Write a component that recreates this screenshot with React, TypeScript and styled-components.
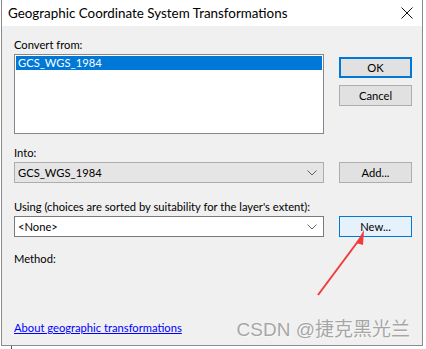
import styled, { createGlobalStyle } from 'styled-components';

const GlobalStyle = createGlobalStyle`
  html, body {
    margin: 0;
    padding: 0;
    background: #ffffff;
  }
  body {
    font-family: Lato, "Noto Sans", "Liberation Sans", sans-serif;
    font-size: 11.2px;
    color: #000;
  }
`;

const Screen = styled.div`
  position: relative;
  width: 426px;
  height: 349px;
  overflow: hidden;
  background: #ffffff;
`;

const Window = styled.div`
  position: relative;
  margin-left: 1px;
  width: 420px;
  height: 345px;
  border: 1px solid #8c8c8c;
  border-top: none;
  background: #f0f0f0;
  display: flex;
  flex-direction: column;
`;

const TitleBar = styled.div`
  height: 26px;
  background: #ffffff;
  display: flex;
  align-items: center;
  justify-content: space-between;
  padding: 0 8px 0 6px;
  font-size: 13.4px;
`;

const CloseButton = styled.div`
  width: 12px;
  height: 12px;
  display: flex;
  margin-right: 1px;
`;

const Body = styled.div`
  flex: 1;
  padding: 10px 10px 0 12px;
  display: flex;
  flex-direction: column;
`;

const Section = styled.div<{ $top: number }>`
  margin-top: ${(p) => p.$top}px;
  display: flex;
  flex-direction: column;
`;

const Label = styled.div`
  height: 16px;
  line-height: 16px;
  white-space: nowrap;
  margin-bottom: 1px;
`;

const ControlRow = styled.div`
  display: flex;
  gap: 15px;
  align-items: flex-start;
`;

const ListBox = styled.div`
  width: 308px;
  height: 76px;
  border: 1px solid #828790;
  background: #ffffff;
  padding: 1px;
`;

const ListItem = styled.div<{ $selected?: boolean }>`
  height: 14px;
  line-height: 14px;
  padding-left: 2px;
  background: ${(p) => (p.$selected ? '#0078d7' : 'transparent')};
  color: ${(p) => (p.$selected ? '#ffffff' : '#000000')};
`;

const Combo = styled.div<{ $disabled?: boolean }>`
  box-sizing: border-box;
  width: 310px;
  height: 21px;
  border: 1px solid ${(p) => (p.$disabled ? '#adadad' : '#7a7a7a')};
  background: ${(p) => (p.$disabled ? '#e5e5e5' : '#ffffff')};
  display: flex;
  align-items: center;
  justify-content: space-between;
  padding: 0 6px 0 3px;
`;

const ButtonColumn = styled.div`
  display: flex;
  flex-direction: column;
  gap: 7px;
  padding-top: 3px;
`;

const Button = styled.div<{ $variant?: 'default' | 'hover' }>`
  box-sizing: border-box;
  width: 73px;
  height: 21px;
  display: flex;
  align-items: center;
  justify-content: center;
  background: ${(p) => (p.$variant === 'hover' ? '#e5f1fb' : '#e1e1e1')};
  border: ${(p) =>
    p.$variant === 'default'
      ? '2px solid #0078d7'
      : p.$variant === 'hover'
      ? '1px solid #0078d7'
      : '1px solid #adadad'};
`;

const Spacer = styled.div`
  flex: 1;
`;

const HelpLink = styled.a`
  color: #0000ff;
  text-decoration: underline;
  height: 16px;
  line-height: 16px;
  margin-bottom: 9px;
  align-self: flex-start;
  cursor: pointer;
`;

const Watermark = styled.div`
  position: absolute;
  right: 16px;
  bottom: 8px;
  font-family: "Liberation Sans", "Noto Sans CJK SC", sans-serif;
  font-size: 19px;
  color: rgba(140, 140, 140, 0.75);
  text-shadow: 1px 1px 1px rgba(255, 255, 255, 0.6);
  white-space: nowrap;
`;

const ArrowLayer = styled.svg`
  position: absolute;
  left: 0;
  top: 0;
  pointer-events: none;
`;

const BackEdge = styled.div`
  position: absolute;
  left: 11px;
  top: 346px;
  width: 1px;
  height: 3px;
  background: #555;
`;

function Chevron() {
  return (
    <svg width="10" height="6" viewBox="0 0 10 6">
      <path d="M0.5 0.5 L5 5 L9.5 0.5" fill="none" stroke="#606060" strokeWidth="1" />
    </svg>
  );
}

export default function App() {
  return (
    <Screen>
      <GlobalStyle />
      <Window>
        <TitleBar>
          <span>Geographic Coordinate System Transformations</span>
          <CloseButton>
            <svg width="12" height="12" viewBox="0 0 12 12">
              <path d="M0.5 0.5 L11.5 11.5 M11.5 0.5 L0.5 11.5" stroke="#111" strokeWidth="1" />
            </svg>
          </CloseButton>
        </TitleBar>
        <Body>
          <Section $top={1}>
            <Label>Convert from:</Label>
            <ControlRow>
              <ListBox>
                <ListItem $selected>GCS_WGS_1984</ListItem>
              </ListBox>
              <ButtonColumn>
                <Button $variant="default">OK</Button>
                <Button>Cancel</Button>
              </ButtonColumn>
            </ControlRow>
          </Section>

          <Section $top={11}>
            <Label>Into:</Label>
            <ControlRow>
              <Combo $disabled>
                <span>GCS_WGS_1984</span>
                <Chevron />
              </Combo>
              <Button>Add...</Button>
            </ControlRow>
          </Section>

          <Section $top={16}>
            <Label>Using (choices are sorted by suitability for the layer's extent):</Label>
            <ControlRow>
              <Combo>
                <span>&lt;None&gt;</span>
                <Chevron />
              </Combo>
              <Button $variant="hover">New...</Button>
            </ControlRow>
          </Section>

          <Section $top={14}>
            <Label>Method:</Label>
          </Section>

          <Spacer />
          <HelpLink>About geographic transformations</HelpLink>
        </Body>
      </Window>
      <BackEdge />
      <Watermark>CSDN @捷克黑光兰</Watermark>
      <ArrowLayer width="426" height="349">
        <line x1="318" y1="295" x2="359" y2="240" stroke="#f23c3c" strokeWidth="2" />
        <polygon points="364,230 356,243 363,245" fill="#f23c3c" />
      </ArrowLayer>
    </Screen>
  );
}
